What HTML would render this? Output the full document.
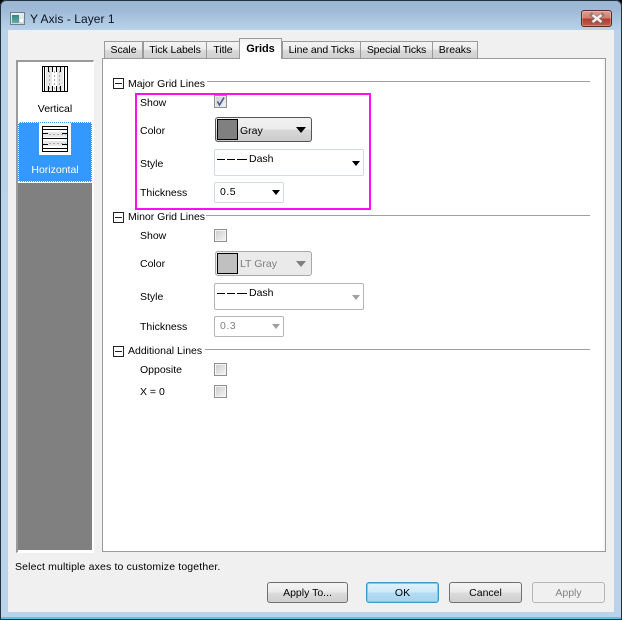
<!DOCTYPE html>
<html><head><meta charset="utf-8"><style>
html,body{margin:0;padding:0;background:#000}
#w{position:relative;width:622px;height:620px;overflow:hidden;background:linear-gradient(#9cb6d3 0,#9fbad6 10px,#b9d2ea 30px,#bad3ea 100%);font:10.5px "Liberation Sans",sans-serif;color:#000;border-radius:6px 6px 0 0}
#w div,#w span{position:absolute;box-sizing:border-box}
.t{white-space:nowrap;line-height:13px;height:13px}
.edge{pointer-events:none}
.tab{top:41px;height:17px;background:linear-gradient(#f4f4f4 0,#ececec 45%,#d9d9d9 55%,#d0d0d0 100%);border:1px solid #9a9a9a;border-bottom:none;text-align:center;line-height:16px;white-space:nowrap;letter-spacing:-.05px}
.ln{height:1px;background:#a0a0a0}
.box{width:11px;height:11px;border:1px solid #222;left:113px}
.box::after{content:"";position:absolute;left:1px;top:4px;width:7px;height:1px;background:#222}
.cb{width:13px;height:13px;left:214px;border:1px solid #8e8f8f;background:#f4f4f4}
.cb::after{content:"";position:absolute;left:1px;top:1px;width:9px;height:9px;background:linear-gradient(135deg,#cfcfcf,#f2f2f2)}
.sel{background:#fff;border:1px solid #d5dadf;border-radius:2px}
.btn{top:582px;height:21px;border:1px solid #707070;border-radius:3px;background:linear-gradient(#f3f3f3 0,#ebebeb 48%,#dcdcdc 52%,#cfcfcf 100%);text-align:center;line-height:20px}
</style></head><body><div id="w">
<div class="edge" style="left:0;top:0;width:622px;height:620px;border:1px solid #23323f;border-radius:6px 6px 0 0;z-index:5"></div>
<div style="left:1px;bottom:1px;width:620px;height:2px;background:#3fc0e8;opacity:.8;z-index:4"></div>

<!-- title -->
<div style="left:10px;top:12px;width:15px;height:13px;background:linear-gradient(#e8eef2,#cfd6da);border:1px solid #6f7f88"></div>
<div style="left:12px;top:15px;width:7px;height:8px;background:linear-gradient(#2f8a7e,#6aa7a8)"></div>
<div style="left:20px;top:19px;width:3px;height:3px;background:#fff"></div>
<div class="t" style="left:30px;top:12px;font-size:12px;color:#0a1420;height:14px;line-height:14px;letter-spacing:.05px">Y Axis - Layer 1</div>
<div style="left:581px;top:10px;width:31px;height:17px;border:1px solid #5b2a2a;border-radius:3px;background:linear-gradient(#dc9c90 0,#d08070 45%,#b63b2c 55%,#c0604c 100%);box-shadow:inset 0 0 0 1px rgba(255,255,255,.25)"></div>
<svg style="position:absolute;left:589px;top:12px" width="16" height="13"><path d="M3 3L13 10M13 3L3 10" stroke="#6a6a6a" stroke-width="4" stroke-linecap="square" opacity=".6"/><path d="M3.5 3L12.5 10M12.5 3L3.5 10" stroke="#efefef" stroke-width="2.4"/></svg>

<!-- client -->
<div style="left:8px;top:30px;width:606px;height:582px;background:#f0f0f0"></div>

<!-- tabs -->
<div class="tab" style="left:104px;width:39px">Scale</div>
<div class="tab" style="left:143px;width:64px;letter-spacing:-.1px">Tick Labels</div>
<div class="tab" style="left:206px;width:34px">Title</div>
<div class="tab" style="left:282px;width:79px;letter-spacing:-.1px">Line and Ticks</div>
<div class="tab" style="left:360px;width:73px;letter-spacing:-.15px">Special Ticks</div>
<div class="tab" style="left:432px;width:46px">Breaks</div>

<!-- panel -->
<div style="left:102px;top:58px;width:504px;height:494px;background:#fff;border:1px solid #9a9a9a;box-shadow:inset -2px 0 0 #f6f6f6"></div>
<div class="tab" style="left:239px;top:38px;width:43px;height:21px;background:linear-gradient(#f2f2f2,#fff 60%);border-color:#9a9a9a;font-weight:bold;font-size:11px;line-height:21px;z-index:2">Grids</div>

<!-- left list -->
<div style="left:16px;top:60px;width:78px;height:493px;background:#fff;border:2px solid #9a9a9a;border-right:1px solid #fff;border-bottom:1px solid #fff"></div>
<div style="left:18px;top:183px;width:74px;height:367px;background:#808080"></div>
<div style="left:18px;top:122px;width:74px;height:60px;background:#3399ff;outline:1px dotted #fff;outline-offset:-1px"></div>

<svg style="position:absolute;left:42px;top:66px" width="26" height="26">
<rect x="4" y="1" width="6" height="24" fill="#e8e8e8"/><rect x="15" y="1" width="6" height="24" fill="#e8e8e8"/>
<path d="M7.5 5V24M17.5 5V24M12.5 5V24" stroke="#aaa" stroke-dasharray="2 2"/>
<path d="M2.5 1V25M6.5 1V6M10.5 1V6M14.5 1V6M18.5 1V6M22.5 1V25M6.5 20V25M10.5 20V25M14.5 20V25M18.5 20V25" stroke="#000"/>
<rect x=".5" y=".5" width="25" height="25" fill="none" stroke="#000"/>
</svg>
<div class="t" style="left:18px;top:103px;width:74px;text-align:center">Vertical</div>

<div style="left:39px;top:123px;width:32px;height:32px;background:#fff"></div>
<svg style="position:absolute;left:42px;top:126px" width="26" height="26">
<rect x="1" y="6" width="24" height="5" fill="#e8e8e8"/><rect x="1" y="15" width="24" height="5" fill="#e8e8e8"/>
<path d="M7 8.5H24M7 17.5H24" stroke="#aaa" stroke-dasharray="2 2"/>
<path d="M1 3.5H25M1 12.5H25M1 22.5H25M1 7.5H6M20 7.5H25M1 18.5H6M20 18.5H25" stroke="#000"/>
<rect x=".5" y=".5" width="25" height="25" fill="none" stroke="#000"/>
</svg>
<div class="t" style="left:18px;top:164px;width:74px;text-align:center;color:#fff">Horizontal</div>

<!-- Major -->
<div class="box" style="top:78px"></div>
<div class="t" style="left:128px;top:78px">Major Grid Lines</div>
<div class="ln" style="left:207px;top:81px;width:383px"></div>
<div style="left:135px;top:93px;width:236px;height:117px;border:2px solid #ff0ff0"></div>
<div class="t" style="left:140px;top:97px">Show</div>
<div class="cb" style="top:95px;background:#e8e8ee"></div>
<svg style="position:absolute;left:214px;top:95px" width="13" height="13"><path d="M3.5 6.5L5.5 10L10 2.5" fill="none" stroke="#4a5c9c" stroke-width="1.7"/></svg>
<div class="t" style="left:140px;top:125px">Color</div>
<div style="left:215px;top:117px;width:97px;height:25px;border:1px solid #555;border-radius:3px;background:linear-gradient(#f2f2f2 0,#ebebeb 48%,#d8d8d8 52%,#cdcdcd 100%)"></div>
<div style="left:217px;top:119px;width:21px;height:21px;background:#808080;border:1px solid #000"></div>
<div class="t" style="left:240px;top:125px">Gray</div>
<svg style="position:absolute;left:296px;top:127px" width="10" height="6"><path d="M0 0H10L5 6Z" fill="#000"/></svg>
<div class="t" style="left:140px;top:158px">Style</div>
<div class="sel" style="left:214px;top:149px;width:150px;height:27px"></div>
<div class="ln" style="left:217px;top:159px;width:8px;background:#000"></div>
<div class="ln" style="left:227px;top:159px;width:8px;background:#000"></div>
<div class="ln" style="left:237px;top:159px;width:10px;background:#000"></div>
<div class="t" style="left:249px;top:153px">Dash</div>
<svg style="position:absolute;left:352px;top:161px" width="8" height="5"><path d="M0 0H8L4 5Z" fill="#000"/></svg>
<div class="t" style="left:140px;top:187px">Thickness</div>
<div class="sel" style="left:214px;top:182px;width:70px;height:21px"></div>
<div class="t" style="left:220px;top:186px;letter-spacing:.5px">0.5</div>
<svg style="position:absolute;left:272px;top:190px" width="8" height="5"><path d="M0 0H8L4 5Z" fill="#000"/></svg>

<!-- Minor -->
<div class="box" style="top:212px"></div>
<div class="t" style="left:128px;top:211px">Minor Grid Lines</div>
<div class="ln" style="left:206px;top:215px;width:384px"></div>
<div class="t" style="left:140px;top:230px">Show</div>
<div class="cb" style="top:229px"></div>
<div class="t" style="left:140px;top:258px">Color</div>
<div style="left:215px;top:251px;width:97px;height:25px;border:1px solid #a8a8a8;border-radius:3px;background:#eaeaea"></div>
<div style="left:217px;top:253px;width:21px;height:21px;background:#c0c0c0;border:1px solid #000"></div>
<div class="t" style="left:240px;top:258px;color:#7f7f7f">LT Gray</div>
<svg style="position:absolute;left:296px;top:261px" width="10" height="6"><path d="M0 0H10L5 6Z" fill="#7f7f7f"/></svg>
<div class="t" style="left:140px;top:291px">Style</div>
<div class="sel" style="left:214px;top:283px;width:150px;height:27px;border-color:#b5b5b5"></div>
<div class="ln" style="left:217px;top:293px;width:8px;background:#000"></div>
<div class="ln" style="left:227px;top:293px;width:8px;background:#000"></div>
<div class="ln" style="left:237px;top:293px;width:10px;background:#000"></div>
<div class="t" style="left:249px;top:287px">Dash</div>
<svg style="position:absolute;left:352px;top:295px" width="8" height="5"><path d="M0 0H8L4 5Z" fill="#a0a0a0"/></svg>
<div class="t" style="left:140px;top:321px">Thickness</div>
<div class="sel" style="left:214px;top:316px;width:70px;height:21px;border-color:#b5b5b5"></div>
<div class="t" style="left:220px;top:320px;color:#7f7f7f;letter-spacing:.5px">0.3</div>
<svg style="position:absolute;left:272px;top:324px" width="8" height="5"><path d="M0 0H8L4 5Z" fill="#a0a0a0"/></svg>

<!-- Additional -->
<div class="box" style="top:346px"></div>
<div class="t" style="left:128px;top:345px">Additional Lines</div>
<div class="ln" style="left:205px;top:349px;width:385px"></div>
<div class="t" style="left:140px;top:364px">Opposite</div>
<div class="cb" style="top:363px"></div>
<div class="t" style="left:140px;top:386px">X = 0</div>
<div class="cb" style="top:385px"></div>

<!-- footer -->
<div class="t" style="left:15px;top:561px;letter-spacing:.15px">Select multiple axes to customize together.</div>
<div class="btn" style="left:267px;width:81px">Apply To...</div>
<div class="btn" style="left:366px;width:73px;border-color:#3a9ac8;background:linear-gradient(#dff2fb 0,#cfeaf8 48%,#b4dcf2 52%,#a6d4ee 100%);box-shadow:inset 0 0 0 1px #6fd0f5">OK</div>
<div class="btn" style="left:449px;width:73px">Cancel</div>
<div class="btn" style="left:532px;width:73px;background:#f0f0f0;border-color:#b5b5b5;color:#838383">Apply</div>
</div></body></html>
